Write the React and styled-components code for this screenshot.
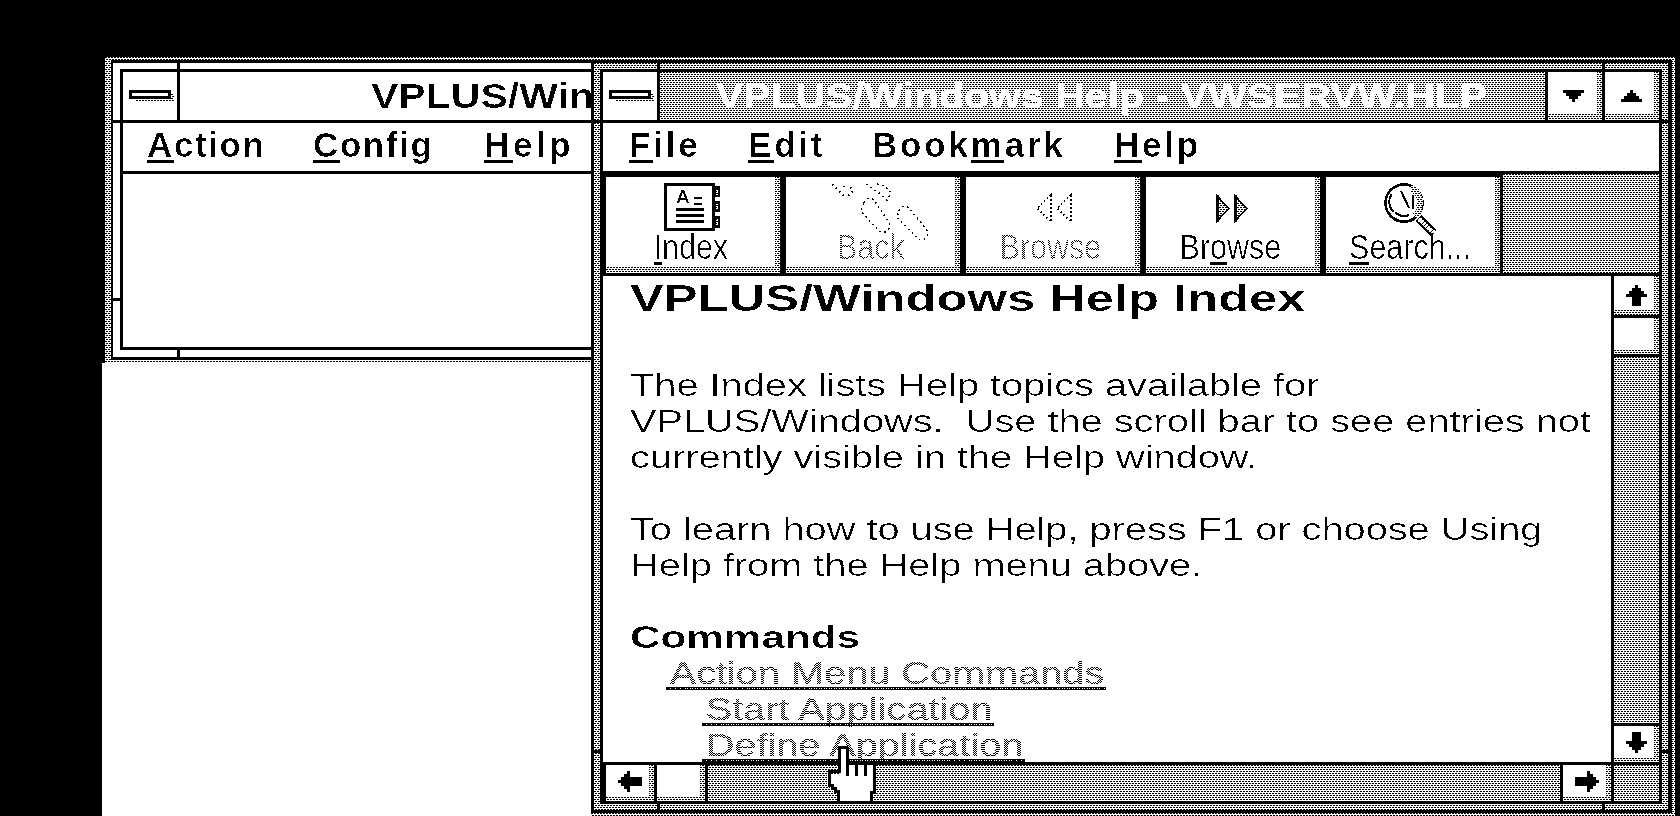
import React from "react";
import styled, { createGlobalStyle, css } from "styled-components";

const tile = (d, w = 6, h = 4) =>
  `url("data:image/svg+xml,%3Csvg xmlns='http://www.w3.org/2000/svg' width='${w}' height='${h}' shape-rendering='crispEdges'%3E%3Cpath d='${d}'/%3E%3C/svg%3E")`;
const DITHER = tile("M0 0h2v1h-2zM3 0h2v1h-2zM1 2h2v1h-2zM4 2h2v1h-2z");
const CHECK = tile("M0 0h1v1h-1zM1 1h1v1h-1z", 2, 2);
const DENSE = tile("M0 0h2v1h-2zM0 1h1v1h-1z", 2, 2);

const dither = css`
  background-color: #fff;
  background-image: ${DITHER};
`;
const raised = (r, b) => css`
  background-color: #fff;
  background-image: linear-gradient(#fff, #fff), ${DITHER};
  background-repeat: no-repeat, repeat;
  background-size: calc(100% - ${r}px) calc(100% - ${b}px), auto;
`;
const widen = (k) => css`
  transform: scaleX(${k});
  transform-origin: 0 50%;
`;

const Global = createGlobalStyle`
  html, body { margin: 0; padding: 0; background: #000; overflow: hidden; }
  * { box-sizing: border-box; }
`;

const Screen = styled.div`
  width: 1680px;
  height: 816px;
  padding: 57px 5px 0 102px;
  display: flex;
  background: #000;
  color: #000;
  overflow: hidden;
  filter: url(#crisp);
  position: relative;
`;
const FilterDefs = styled.svg`
  position: absolute;
  width: 0;
  height: 0;
`;
const LeftColumn = styled.div`
  width: 489px;
  flex: none;
  display: flex;
  flex-direction: column;
`;
const Desktop = styled.div`
  flex: 1;
  background: #fff;
`;
const BackWindow = styled.div`
  margin-left: 3px;
  height: 306px;
  flex: none;
  padding: 3px 0 3px 6px;
  ${dither};
  overflow: hidden;
`;
const BackFrame = styled.div`
  height: 100%;
  background: #fff;
  border: solid #000;
  border-width: 3px 0 3px 2px;
  padding: 6px 0 7px 7px;
  position: relative;
`;
const BackInner = styled.div`
  height: 100%;
  border: solid #000;
  border-width: 3px 0 3px 3px;
  display: flex;
  flex-direction: column;
  background: #fff;
`;
const FrontWindow = styled.div`
  width: 1084px;
  height: 759px;
  flex: none;
  padding: 3px 3px 3px 0;
  ${dither};
`;
const FrontFrame = styled.div`
  height: 100%;
  border: solid #000;
  border-width: 3px 4px 3px 3px;
  padding: 6px;
  ${dither};
  position: relative;
`;
const FrontInner = styled.div`
  height: 100%;
  border: 3px solid #000;
  display: flex;
  flex-direction: column;
  background: #fff;
`;
const Tick = styled.i`
  position: absolute;
  background: #000;
  ${(p) =>
    p.$x !== undefined
      ? css`
          left: ${p.$x}px;
          width: 3px;
          ${p.$bottom ? "bottom: 0" : "top: 0"};
          height: ${p.$len}px;
        `
      : css`
          top: ${p.$y}px;
          height: 3px;
          ${p.$right ? "right: 0" : "left: 0"};
          width: ${p.$len}px;
        `}
`;
const TitleBar = styled.div`
  height: 51px;
  flex: none;
  display: flex;
  border-bottom: 3px solid #000;
`;
const SysBox = styled.div`
  width: 57px;
  flex: none;
  border-right: 3px solid #000;
  padding: 18px 0 0 6px;
  background: #fff;
`;
const SysIcon = styled.svg`
  display: block;
`;
const Caption = styled.div`
  flex: 1;
  min-width: 0;
  font: 700 35px/48px "Liberation Sans", sans-serif;
  white-space: nowrap;
  overflow: hidden;
  padding-left: ${(p) => p.$pad}px;
  ${(p) =>
    p.$active
      ? css`
          ${dither};
          color: #fff;
        `
      : css`
          background: #fff;
          color: #000;
        `}
`;
const CaptionText = styled.span`
  display: inline-block;
  ${widen(1.172)};
`;
const SizeButton = styled.div`
  width: 57px;
  flex: none;
  border-left: 3px solid #000;
  ${raised(5, 6)};
  display: flex;
  justify-content: center;
  padding: 18px ${(p) => p.$shift}px 0 0;
`;
const MenuBar = styled.div`
  height: 51px;
  flex: none;
  border-bottom: 3px solid #000;
  display: flex;
  padding-left: ${(p) => p.$pad}px;
  font: 700 35px/44px "Liberation Sans", sans-serif;
  background: #fff;
`;
const MenuItem = styled.span`
  white-space: nowrap;
  width: ${(p) => (p.$w ? `${p.$w}px` : "auto")};
  flex: none;
  letter-spacing: ${(p) => p.$ls}px;
`;
const Mnemonic = styled.span`
  text-decoration: underline;
  text-decoration-thickness: 3px;
  text-underline-offset: 3px;
  text-decoration-skip-ink: none;
`;
const Toolbar = styled.div`
  height: 102px;
  flex: none;
  display: flex;
  border-bottom: 3px solid #000;
  ${dither};
`;
const ToolLead = styled.div`
  width: 3px;
  flex: none;
  background: #000;
`;
const ToolButton = styled.div`
  width: ${(p) => (p.$last ? 177 : 180)}px;
  flex: none;
  border-top: 3px solid #000;
  border-right: ${(p) => (p.$last ? 3 : 6)}px solid #000;
  ${raised(5, 6)};
  display: flex;
  flex-direction: column;
  align-items: center;
  padding: 6px 5px 0 0;
`;
const ToolIcon = styled.svg`
  height: 48px;
  flex: none;
  overflow: visible;
  display: block;
`;
const ToolLabel = styled.span`
  font: 400 35px/34px "Liberation Sans", sans-serif;
  margin-top: -1px;
  white-space: nowrap;
  transform: scaleX(0.87);
  ${(p) =>
    p.$off &&
    css`
      color: transparent;
      background: ${CHECK};
      -webkit-background-clip: text;
      background-clip: text;
    `}
`;
const Work = styled.div`
  flex: 1;
  min-height: 0;
  display: flex;
`;
const Topic = styled.div`
  flex: 1;
  min-width: 0;
  padding: 0 0 0 27px;
  background: #fff;
  overflow: hidden;
`;
const Heading = styled.div`
  font: 700 37px/46px "Liberation Sans", sans-serif;
  height: 47px;
  white-space: nowrap;
  ${widen(1.37)};
`;
const BodyLine = styled.div`
  font: 400 32px/36px "Liberation Sans", sans-serif;
  height: 36px;
  white-space: pre;
  ${widen(1.242)};
`;
const BoldLine = styled.div`
  font: 700 32px/36px "Liberation Sans", sans-serif;
  height: 36px;
  ${widen(1.32)};
`;
const Gap = styled.div`
  height: ${(p) => p.$h}px;
`;
const TopicLink = styled.div`
  position: relative;
  width: fit-content;
  height: 36px;
  margin-left: ${(p) => p.$indent}px;
  padding: 0 2px 0 3px;
  white-space: nowrap;
  ${widen(1.24)};
  &::after {
    content: "";
    position: absolute;
    left: 0;
    right: 0;
    top: 32px;
    height: 3px;
    background: ${DENSE};
  }
`;
const LinkText = styled.span`
  font: 400 32px/36px "Liberation Sans", sans-serif;
  color: transparent;
  -webkit-text-stroke: 0.7px transparent;
  background: ${CHECK};
  -webkit-background-clip: text;
  background-clip: text;
`;
const VScroll = styled.div`
  width: 48px;
  flex: none;
  border-left: 3px solid #000;
  display: flex;
  flex-direction: column;
`;
const StepV = styled.div`
  height: ${(p) => p.$h}px;
  flex: none;
  ${raised(5, 5)};
  border-bottom: ${(p) => (p.$line ? "3px solid #000" : "0")};
  border-top: ${(p) => (p.$topLine ? "3px solid #000" : "0")};
  display: flex;
  justify-content: center;
  align-items: center;
  padding-bottom: ${(p) => (p.$topLine ? 3 : 0)}px;
`;
const Track = styled.div`
  flex: 1;
  min-width: 0;
  min-height: 0;
  ${dither};
`;
const HScroll = styled.div`
  height: 39px;
  flex: none;
  border-top: 3px solid #000;
  display: flex;
  padding-left: 3px;
  background: #000;
`;
const StepH = styled.div`
  width: ${(p) => p.$w}px;
  flex: none;
  ${raised(5, 5)};
  display: flex;
  justify-content: center;
  align-items: center;
  padding-bottom: 3px;
  border-right: ${(p) => (p.$line ? "3px solid #000" : "0")};
  border-left: ${(p) => (p.$leftLine ? "3px solid #000" : "0")};
`;
const Corner = styled.div`
  width: 48px;
  flex: none;
  border-left: 3px solid #000;
  ${dither};
`;
const Pointer = styled.svg`
  position: absolute;
  left: 820px;
  top: 740px;
  overflow: visible;
`;

const UP = "9,0 12,0 12,3 15,3 15,6 18,6 18,9 21,9 21,12 15,12 15,21 6,21 6,12 0,12 0,9 3,9 3,6 6,6 6,3 9,3";
const RIGHT = "0,6 12,6 12,0 15,0 15,3 18,3 18,6 21,6 21,9 24,9 24,12 21,12 21,15 18,15 18,18 15,18 15,21 12,21 12,15 0,15";
const TRI = "0,0 21,0 21,3 18,3 18,6 15,6 15,9 12,9 12,12 9,12 9,9 6,9 6,6 3,6 3,3 0,3";

const Flip = styled.svg`
  display: block;
  flex: none;
  transform: ${(p) => p.$t || "none"};
`;
const ArrowV = ({ down }) => (
  <Flip width="21" height="21" shapeRendering="crispEdges" $t={down ? "scaleY(-1)" : ""}>
    <polygon points={UP} />
  </Flip>
);
const ArrowH = ({ left }) => (
  <Flip width="24" height="21" shapeRendering="crispEdges" $t={left ? "scaleX(-1)" : ""}>
    <polygon points={RIGHT} />
  </Flip>
);
const Triangle = ({ up }) => (
  <Flip width="21" height="12" shapeRendering="crispEdges" $t={up ? "scaleY(-1)" : ""}>
    <polygon points={TRI} />
  </Flip>
);
const SysGlyph = () => (
  <SysIcon width="48" height="15" shapeRendering="crispEdges">
    <rect x="6" y="9" width="39" height="3" fill="url(#dots)" />
    <rect x="42" y="3" width="3" height="9" fill="url(#dots)" />
    <rect x="1.5" y="1.5" width="39" height="6" fill="#fff" stroke="#000" strokeWidth="3" />
  </SysIcon>
);

const BookIcon = () => (
  <ToolIcon width="60" viewBox="0 0 60 48" shapeRendering="crispEdges">
    <rect x="4.5" y="1.5" width="48" height="45" fill="#fff" stroke="#000" strokeWidth="3" />
    <text x="15" y="20" fontFamily="Liberation Sans" fontWeight="700" fontSize="19">A</text>
    <path d="M33 14h8v2h-8zM33 20h8v2h-8zM15 25h28v3h-28zM15 31h28v3h-28zM15 37h28v3h-28z" />
    <path d="M53 3h6v11h-6zM53 18h6v11h-6zM53 33h6v12h-6z" />
    <path d="M55 6h2v6h-2zM55 21h2v6h-2zM55 36h2v6h-2z" fill="url(#dots)" />
  </ToolIcon>
);
const ChainIcon = () => (
  <ToolIcon width="120" viewBox="0 0 120 48" fill="none" stroke="#000" strokeWidth="2" strokeDasharray="2 3">
    <path d="M21 1L32 12h6l4-4-4-6M32 3l4 2" />
    <path d="M55 1l13 9 8 7 4-7-6-7-8-2" />
    <path d="M53 20a6 6 0 0 1 10-3L77 38a6 6 0 0 1-10 9L50 28z" />
    <path d="M88 28a6 6 0 0 1 10-3L115 46a6 6 0 0 1-9 9L86 34z" />
  </ToolIcon>
);
const RewindIcon = () => (
  <ToolIcon width="60" viewBox="0 0 60 48" fill="none" stroke="#000" strokeWidth="2" strokeDasharray="2 2">
    <path d="M30 12V39L16 25zM50 12V39L36 25z" />
  </ToolIcon>
);
const ForwardIcon = () => (
  <ToolIcon width="60" viewBox="0 0 60 48">
    <path d="M16 13V38L28 25.5zM34 13V38L46 25.5z" fill="url(#dots)" stroke="#000" strokeWidth="2" />
    <path d="M15 12h3v27h-3zM33 12h3v27h-3z" />
  </ToolIcon>
);
const LensIcon = () => (
  <ToolIcon width="60" viewBox="0 0 60 48">
    <path d="M37 35L53 50" stroke="#000" strokeWidth="9" />
    <path d="M38 36L53 50" stroke="#fff" strokeWidth="4" strokeDasharray="2 1" />
    <circle cx="23" cy="20" r="18.5" fill="#fff" stroke="#000" strokeWidth="3" />
    <path d="M30 5a16 16 0 0 1 8 19a16 16 0 0 1-4 9" fill="none" stroke="url(#dots)" strokeWidth="6" />
    <path d="M11 11a13 13 0 0 0 2 18 M20 8l8 17 M14 29a13 13 0 0 0 14 3 M32 12v14" fill="none" stroke="#000" strokeWidth="2.5" />
  </ToolIcon>
);
const HandCursor = () => (
  <Pointer width="60" height="62" shapeRendering="crispEdges">
    <path
      d="M19.5 8.5h7v16h28v28h-3v8h-33v-6h-3v-3h-3v-3h-3v-3h-3v-12h13z"
      fill="#fff"
    />
    <path
      d="M19.5 7V31.5H9.5V45H12V48H15V51H18.5V61M27 7V36M36.5 24V36M45.5 24V36M54.5 24V52.5H51.5V61M18 7.5H28"
      fill="none"
      stroke="#000"
      strokeWidth="3"
    />
  </Pointer>
);

export default function App() {
  return (
    <>
      <Global />
      <FilterDefs aria-hidden="true">
        <defs>
          <filter id="crisp" x="0" y="0" width="100%" height="100%" colorInterpolationFilters="sRGB">
            <feComponentTransfer>
              <feFuncR type="discrete" tableValues="0 1 1 1" />
              <feFuncG type="discrete" tableValues="0 1 1 1" />
              <feFuncB type="discrete" tableValues="0 1 1 1" />
            </feComponentTransfer>
          </filter>
          <pattern id="dots" width="6" height="4" patternUnits="userSpaceOnUse">
            <rect width="6" height="4" fill="#fff" />
            <path d="M0 0h2v1h-2zM3 0h2v1h-2zM1 2h2v1h-2zM4 2h2v1h-2z" fill="#000" />
          </pattern>
        </defs>
      </FilterDefs>
      <Screen>
        <LeftColumn>
          <BackWindow>
            <BackFrame>
              <Tick $x={64} $len={6} />
              <Tick $x={64} $len={7} $bottom />
              <Tick $y={57} $len={7} />
              <Tick $y={235} $len={7} />
              <BackInner>
                <TitleBar>
                  <SysBox><SysGlyph /></SysBox>
                  <Caption $pad={191}><CaptionText>VPLUS/Win</CaptionText></Caption>
                </TitleBar>
                <MenuBar $pad={24}>
                  <MenuItem $w={166} $ls={1.6}><Mnemonic>A</Mnemonic>ction</MenuItem>
                  <MenuItem $w={171} $ls={1.6}><Mnemonic>C</Mnemonic>onfig</MenuItem>
                  <MenuItem $ls={3.6}><Mnemonic>H</Mnemonic>elp</MenuItem>
                </MenuBar>
              </BackInner>
            </BackFrame>
          </BackWindow>
          <Desktop />
        </LeftColumn>
        <FrontWindow>
          <FrontFrame>
            <Tick $x={63} $len={6} />
            <Tick $x={1008} $len={6} />
            <Tick $x={63} $len={6} $bottom />
            <Tick $x={1008} $len={6} $bottom />
            <Tick $y={57} $len={6} />
            <Tick $y={687} $len={6} />
            <Tick $y={57} $len={6} $right />
            <Tick $y={687} $len={6} $right />
            <FrontInner>
              <TitleBar>
                <SysBox><SysGlyph /></SysBox>
                <Caption $active $pad={56}><CaptionText>VPLUS/Windows Help - VWSERVW.HLP</CaptionText></Caption>
                <SizeButton $shift={4}><Triangle /></SizeButton>
                <SizeButton $shift={2}><Triangle up /></SizeButton>
              </TitleBar>
              <MenuBar $pad={26}>
                <MenuItem $w={119} $ls={2.8}><Mnemonic>F</Mnemonic>ile</MenuItem>
                <MenuItem $w={124} $ls={2.8}><Mnemonic>E</Mnemonic>dit</MenuItem>
                <MenuItem $w={242} $ls={2.8}>Book<Mnemonic>m</Mnemonic>ark</MenuItem>
                <MenuItem $ls={2.8}><Mnemonic>H</Mnemonic>elp</MenuItem>
              </MenuBar>
              <Toolbar>
                <ToolLead />
                <ToolButton>
                  <BookIcon />
                  <ToolLabel><Mnemonic>I</Mnemonic>ndex</ToolLabel>
                </ToolButton>
                <ToolButton>
                  <ChainIcon />
                  <ToolLabel $off>Back</ToolLabel>
                </ToolButton>
                <ToolButton>
                  <RewindIcon />
                  <ToolLabel $off>Browse</ToolLabel>
                </ToolButton>
                <ToolButton>
                  <ForwardIcon />
                  <ToolLabel>Br<Mnemonic>o</Mnemonic>wse</ToolLabel>
                </ToolButton>
                <ToolButton $last>
                  <LensIcon />
                  <ToolLabel><Mnemonic>S</Mnemonic>earch...</ToolLabel>
                </ToolButton>
              </Toolbar>
              <Work>
                <Topic>
                  <Heading>VPLUS/Windows Help Index</Heading>
                  <Gap $h={44} />
                  <BodyLine>The Index lists Help topics available for</BodyLine>
                  <BodyLine>VPLUS/Windows.  Use the scroll bar to see entries not</BodyLine>
                  <BodyLine>currently visible in the Help window.</BodyLine>
                  <Gap $h={36} />
                  <BodyLine>To learn how to use Help, press F1 or choose Using</BodyLine>
                  <BodyLine>Help from the Help menu above.</BodyLine>
                  <Gap $h={36} />
                  <BoldLine>Commands</BoldLine>
                  <TopicLink $indent={36}><LinkText>Action Menu Commands</LinkText></TopicLink>
                  <TopicLink $indent={72}><LinkText>Start Application</LinkText></TopicLink>
                  <TopicLink $indent={72}><LinkText>Define Application</LinkText></TopicLink>
                </Topic>
                <VScroll>
                  <StepV $h={42} $line><ArrowV /></StepV>
                  <StepV $h={39} $line />
                  <Track />
                  <StepV $h={39} $topLine><ArrowV down /></StepV>
                </VScroll>
              </Work>
              <HScroll>
                <StepH $w={51} $line><ArrowH left /></StepH>
                <StepH $w={51} $line />
                <Track />
                <StepH $w={51} $leftLine><ArrowH /></StepH>
                <Corner />
              </HScroll>
            </FrontInner>
          </FrontFrame>
        </FrontWindow>
        <HandCursor />
      </Screen>
    </>
  );
}
